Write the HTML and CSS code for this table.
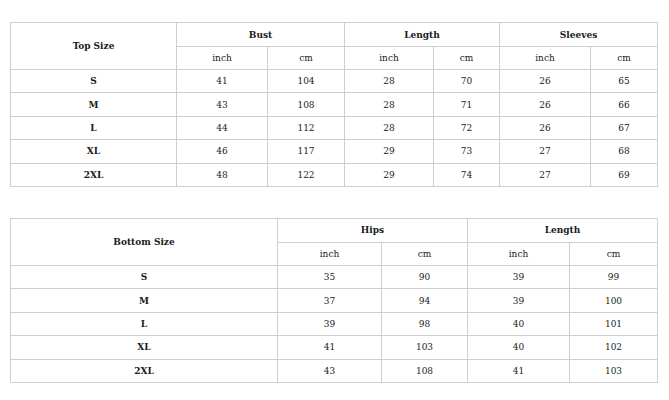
FILE: index.html
```html
<!DOCTYPE html>
<html>
<head>
<meta charset="utf-8">
<link rel="stylesheet" href="styles.css">
</head>
<body>
<div class="page">
<table class="size-table top">
<colgroup>
<col class="c166"><col class="c91"><col class="c77"><col class="c89"><col class="c66"><col class="c91"><col class="c67">
</colgroup>
<thead>
<tr class="h1"><th rowspan="2">Top Size</th><th colspan="2">Bust</th><th colspan="2">Length</th><th colspan="2">Sleeves</th></tr>
<tr class="h2"><td>inch</td><td>cm</td><td>inch</td><td>cm</td><td>inch</td><td>cm</td></tr>
</thead>
<tbody>
<tr><th>S</th><td>41</td><td>104</td><td>28</td><td>70</td><td>26</td><td>65</td></tr>
<tr><th>M</th><td>43</td><td>108</td><td>28</td><td>71</td><td>26</td><td>66</td></tr>
<tr><th>L</th><td>44</td><td>112</td><td>28</td><td>72</td><td>26</td><td>67</td></tr>
<tr><th>XL</th><td>46</td><td>117</td><td>29</td><td>73</td><td>27</td><td>68</td></tr>
<tr><th>2XL</th><td>48</td><td>122</td><td>29</td><td>74</td><td>27</td><td>69</td></tr>
</tbody>
</table>

<table class="size-table bottom">
<colgroup>
<col class="c267"><col class="c104"><col class="c86"><col class="c102"><col class="c88">
</colgroup>
<thead>
<tr class="h1"><th rowspan="2">Bottom Size</th><th colspan="2">Hips</th><th colspan="2">Length</th></tr>
<tr class="h2"><td>inch</td><td>cm</td><td>inch</td><td>cm</td></tr>
</thead>
<tbody>
<tr><th>S</th><td>35</td><td>90</td><td>39</td><td>99</td></tr>
<tr><th>M</th><td>37</td><td>94</td><td>39</td><td>100</td></tr>
<tr><th>L</th><td>39</td><td>98</td><td>40</td><td>101</td></tr>
<tr><th>XL</th><td>41</td><td>103</td><td>40</td><td>102</td></tr>
<tr><th>2XL</th><td>43</td><td>108</td><td>41</td><td>103</td></tr>
</tbody>
</table>
</div>
</body>
</html>
```
FILE: styles.css
```css
html, body {
  margin: 0;
  padding: 0;
  background: #fff;
}
.page {
  padding: 22px 0 0 10px;
  display: flex;
  flex-direction: column;
  gap: 31px;
  align-items: flex-start;
}
.size-table {
  border-collapse: collapse;
  table-layout: fixed;
  width: 647px;
  font-family: "DejaVu Serif Condensed", "DejaVu Serif", serif;
  font-size: 10px;
  color: #1a1a1a;
}
.size-table th,
.size-table td {
  border: 1px solid #cfcfcf;
  padding: 0;
  text-align: center;
  vertical-align: middle;
  height: 22.4px;
  line-height: 12px;
}
.size-table th {
  font-weight: bold;
}
.size-table td {
  font-weight: normal;
}
.size-table .h1 th {
  height: 23px;
}
.size-table .h2 td {
  height: 22px;
}
.c166 { width: 166px; }
.c91 { width: 91px; }
.c77 { width: 77px; }
.c89 { width: 89px; }
.c66 { width: 66px; }
.c67 { width: 67px; }
.c267 { width: 267px; }
.c104 { width: 104px; }
.c86 { width: 86px; }
.c102 { width: 102px; }
.c88 { width: 88px; }
```
